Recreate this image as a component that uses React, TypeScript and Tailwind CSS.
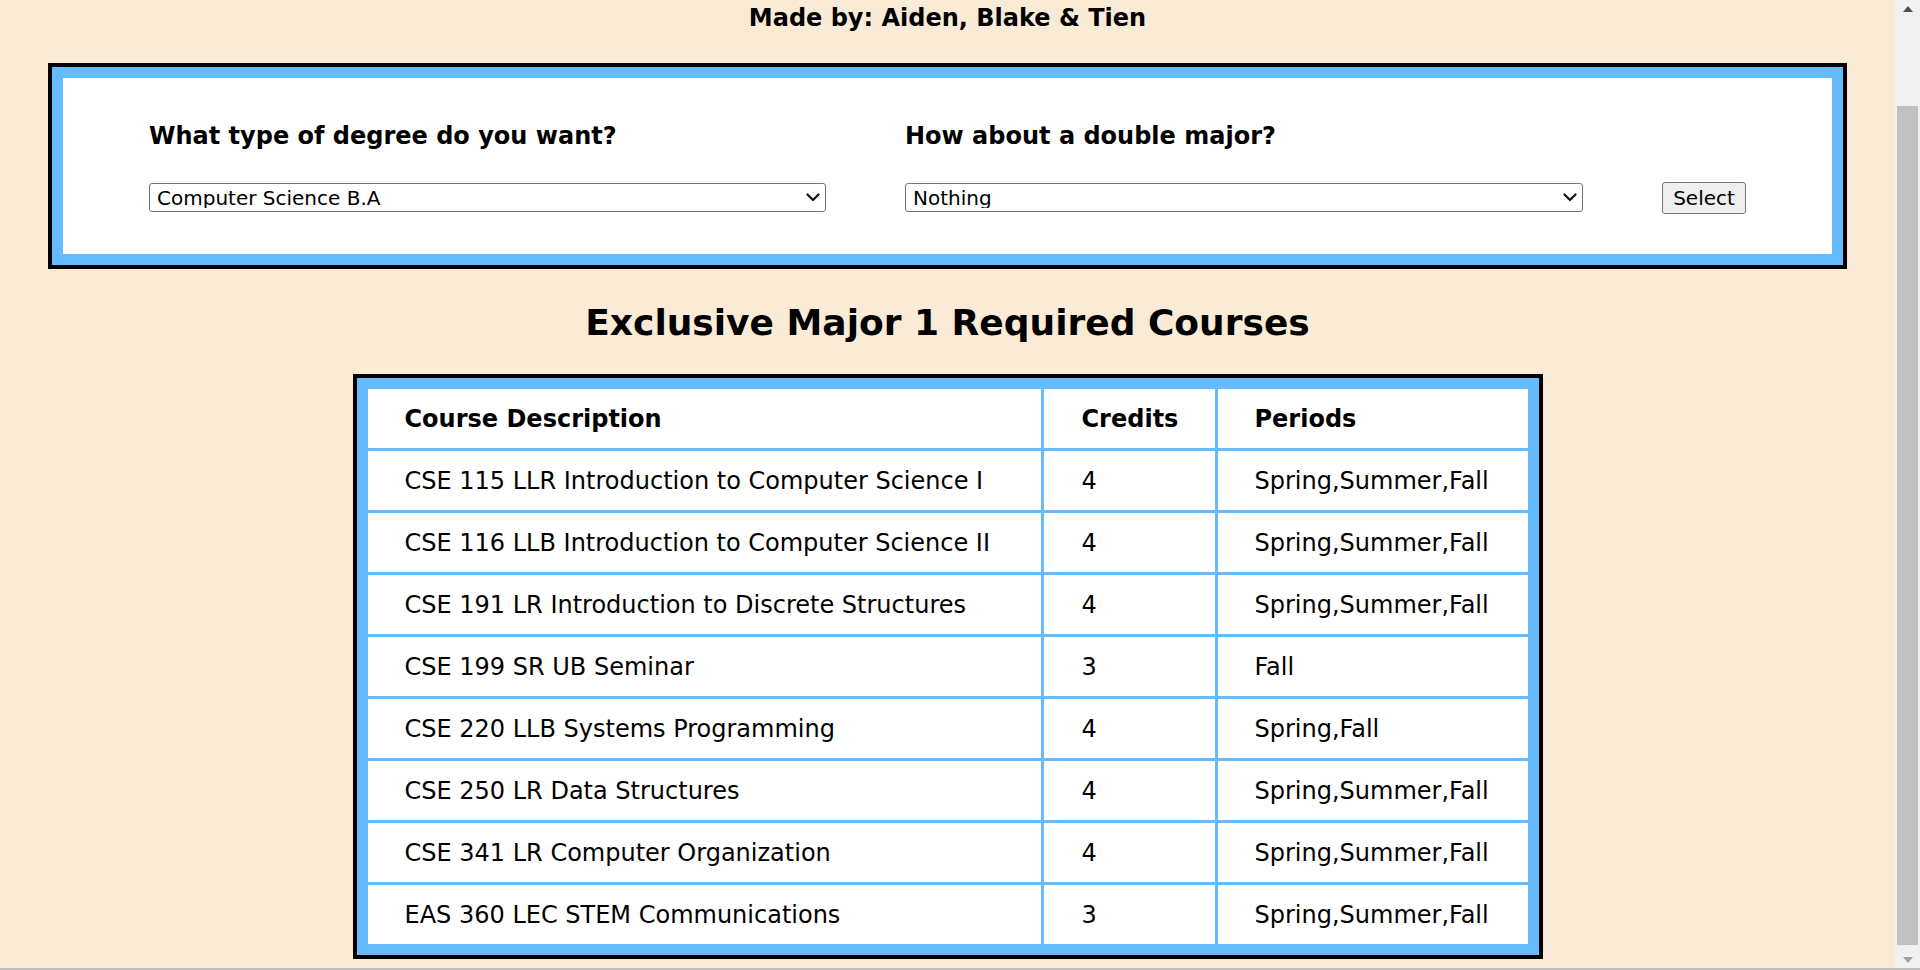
import React from 'react';

type Course = {
  name: string;
  credits: number;
  periods: string;
};

const courses: Course[] = [
  { name: 'CSE 115 LLR Introduction to Computer Science I', credits: 4, periods: 'Spring,Summer,Fall' },
  { name: 'CSE 116 LLB Introduction to Computer Science II', credits: 4, periods: 'Spring,Summer,Fall' },
  { name: 'CSE 191 LR Introduction to Discrete Structures', credits: 4, periods: 'Spring,Summer,Fall' },
  { name: 'CSE 199 SR UB Seminar', credits: 3, periods: 'Fall' },
  { name: 'CSE 220 LLB Systems Programming', credits: 4, periods: 'Spring,Fall' },
  { name: 'CSE 250 LR Data Structures', credits: 4, periods: 'Spring,Summer,Fall' },
  { name: 'CSE 341 LR Computer Organization', credits: 4, periods: 'Spring,Summer,Fall' },
  { name: 'EAS 360 LEC STEM Communications', credits: 3, periods: 'Spring,Summer,Fall' },
];

function Dropdown({ value, options }: { value: string; options: string[] }) {
  return (
    <div className="relative w-full">
      <select
        defaultValue={value}
        className="block h-[29px] w-full appearance-none rounded-[3px] border border-[#767676] bg-white pl-[7px] text-[20px] leading-none text-black"
      >
        {options.map((o) => (
          <option key={o} value={o}>
            {o}
          </option>
        ))}
      </select>
      <svg
        className="pointer-events-none absolute right-[6px] top-[10px]"
        width="14"
        height="9"
        viewBox="0 0 14 9"
        fill="none"
      >
        <path d="M1.5 1.5 L7 7 L12.5 1.5" stroke="#111" strokeWidth="2.2" strokeLinecap="round" strokeLinejoin="round" />
      </svg>
    </div>
  );
}

// the browser's scrollbar, drawn since the headless page hides it
function ScrollBar() {
  return (
    <div className="flex w-[25px] shrink-0 flex-col bg-[#f1f1f1]">
      <div className="flex h-[17px] items-center justify-center">
        <svg width="10" height="6" viewBox="0 0 10 6">
          <polygon points="0,6 5,0 10,6" fill="#505050" />
        </svg>
      </div>
      <div className="flex flex-1 flex-col px-[2px] pt-[89px] pb-[6px]">
        <div className="flex-1 bg-[#c1c1c1]" />
      </div>
      <div className="flex h-[17px] items-center justify-center">
        <svg width="10" height="6" viewBox="0 0 10 6">
          <polygon points="0,0 10,0 5,6" fill="#a3a3a3" />
        </svg>
      </div>
    </div>
  );
}

export default function App() {
  return (
    <div className="flex h-screen flex-col overflow-hidden bg-[#faebd7] font-['DejaVu_Sans',Verdana,sans-serif] text-black">
      <div className="flex min-h-0 flex-1">
        <main className="min-w-0 flex-1 pt-[4px]">
          <p className="text-center text-[24px] font-bold leading-[28px]">Made by: Aiden, Blake &amp; Tien</p>

          {/* degree picker */}
          <div className="mx-[48px] mt-[31px] border-4 border-black">
            <div className="flex items-end justify-between border-[11px] border-[#66bbff] bg-white px-[86px] pt-[44px] pb-[42px]">
              <div className="flex w-[677px] flex-col gap-[33px]">
                <label className="text-[24px] font-bold leading-[28px]">What type of degree do you want?</label>
                <Dropdown
                  value="Computer Science B.A"
                  options={['Computer Science B.A', 'Computer Science B.S', 'Computer Engineering B.S']}
                />
              </div>
              <div className="flex w-[678px] flex-col gap-[33px]">
                <label className="text-[24px] font-bold leading-[28px]">How about a double major?</label>
                <Dropdown value="Nothing" options={['Nothing', 'Mathematics B.A', 'Physics B.S']} />
              </div>
              <button className="mb-[-2px] h-[32px] w-[84px] rounded-[3px] border border-[#767676] bg-[#efefef] text-[20px] leading-none text-black">
                Select
              </button>
            </div>
          </div>

          <h1 className="mt-[33px] text-center text-[36px] font-bold leading-[42px]">
            Exclusive Major 1 Required Courses
          </h1>

          <div className="mx-auto mt-[30px] w-fit border-4 border-black bg-[#66bbff] p-[8px]">
            <table className="border-separate border-spacing-[3px] text-left text-[24px]">
              <thead>
                <tr>
                  <th className="h-[59px] w-[673px] bg-white pl-[37px] font-bold">Course Description</th>
                  <th className="h-[59px] w-[171px] bg-white pl-[38px] font-bold">Credits</th>
                  <th className="h-[59px] w-[310px] bg-white pl-[37px] font-bold">Periods</th>
                </tr>
              </thead>
              <tbody>
                {courses.map((c) => (
                  <tr key={c.name}>
                    <td className="h-[59px] bg-white pl-[37px]">{c.name}</td>
                    <td className="h-[59px] bg-white pl-[38px]">{c.credits}</td>
                    <td className="h-[59px] bg-white pl-[37px]">{c.periods}</td>
                  </tr>
                ))}
              </tbody>
            </table>
          </div>
        </main>
        <ScrollBar />
      </div>
      <div className="h-[2px] shrink-0 bg-[#bdbdbd]" />
    </div>
  );
}
